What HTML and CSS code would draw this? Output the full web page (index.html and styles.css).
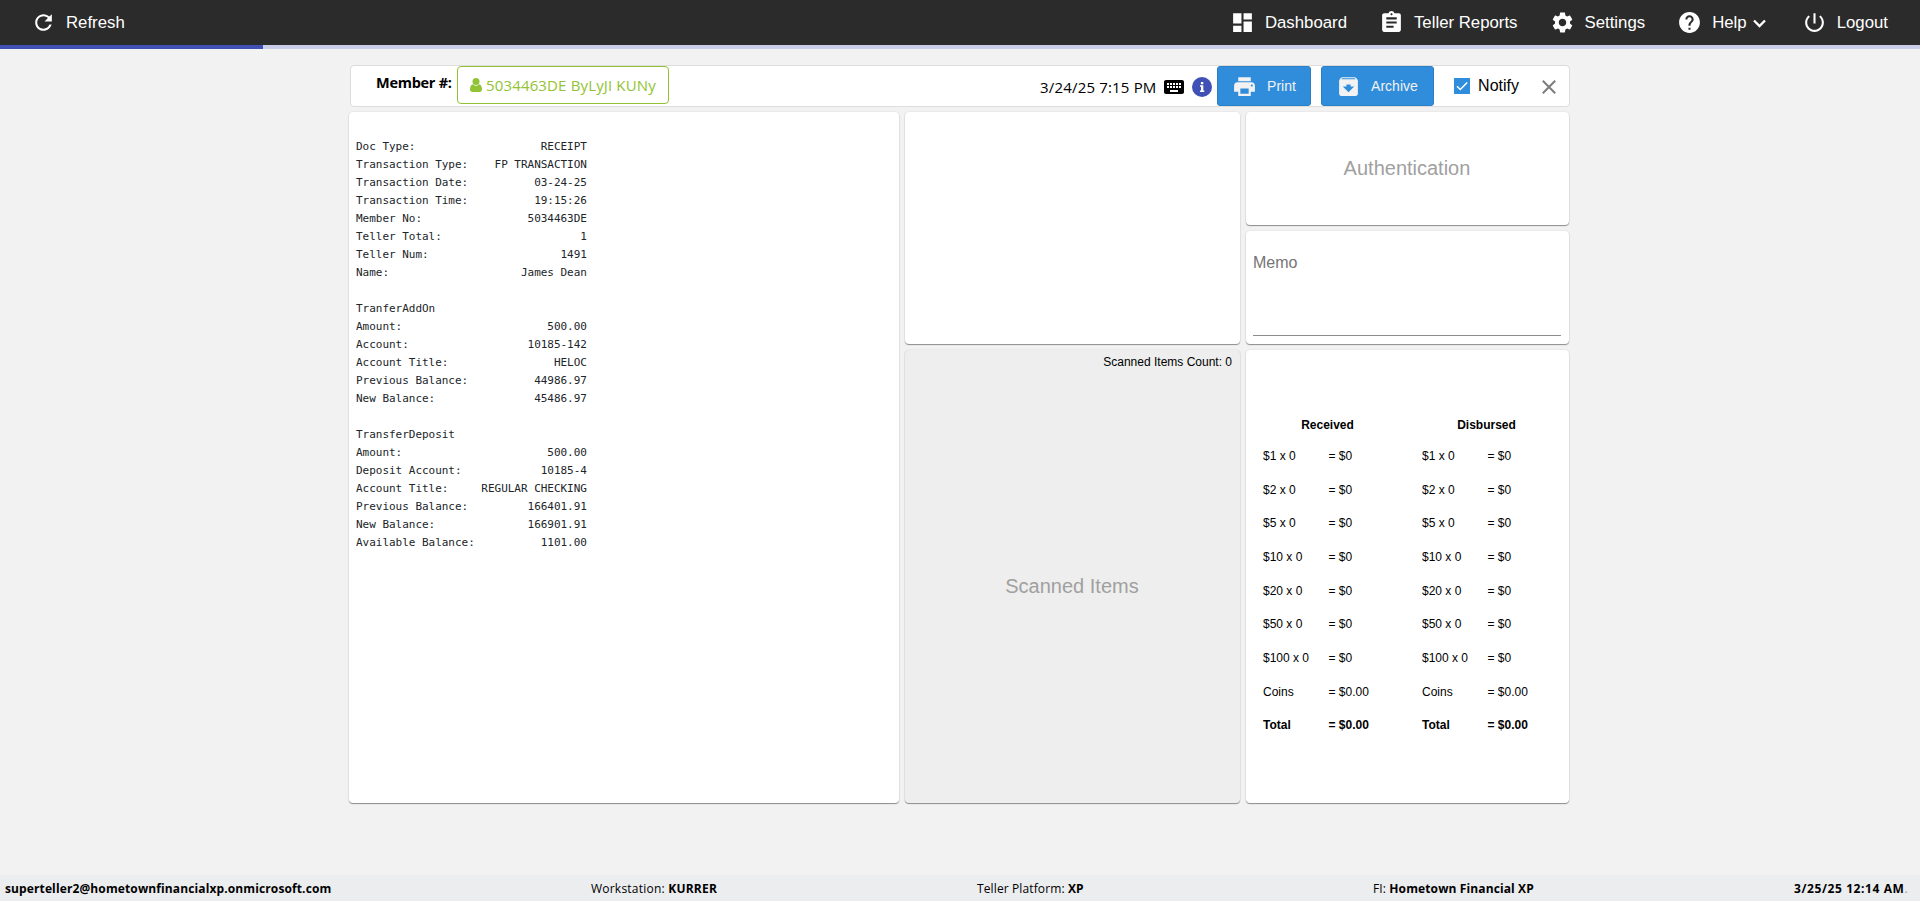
FILE: index.html
```html
<!DOCTYPE html>
<html lang="en">

<head>
	<meta charset="UTF-8">
	<meta name="viewport" content="width=device-width, initial-scale=1">
	<title>Teller Receipts</title>
	<link rel="stylesheet" href="styles.css">
</head>

<body>
	<header class="topbar">
		<a class="nav-item">
			<svg class="icon" viewBox="0 0 24 24"><path d="M17.65 6.35C16.2 4.9 14.21 4 12 4c-4.42 0-7.99 3.58-7.99 8s3.57 8 7.99 8c3.73 0 6.84-2.55 7.73-6h-2.08c-.82 2.33-3.04 4-5.65 4-3.31 0-6-2.69-6-6s2.69-6 6-6c1.66 0 3.14.69 4.22 1.78L13 11h7V4l-2.35 2.35z"/></svg>
			<span>Refresh</span>
		</a>
		<nav class="nav">
			<a class="nav-item">
				<svg class="icon" viewBox="0 0 24 24"><path d="M3 13h8V3H3v10zm0 8h8v-6H3v6zm10 0h8V11h-8v10zm0-18v6h8V3h-8z"/></svg>
				<span>Dashboard</span>
			</a>
			<a class="nav-item">
				<svg class="icon" viewBox="0 0 24 24"><path d="M19 3h-4.18C14.4 1.84 13.3 1 12 1c-1.3 0-2.4.84-2.82 2H5c-1.1 0-2 .9-2 2v14c0 1.1.9 2 2 2h14c1.1 0 2-.9 2-2V5c0-1.1-.9-2-2-2zm-7 0c.55 0 1 .45 1 1s-.45 1-1 1-1-.45-1-1 .45-1 1-1zm2 14H7v-2h7v2zm3-4H7v-2h10v2zm0-4H7V7h10v2z"/></svg>
				<span>Teller Reports</span>
			</a>
			<a class="nav-item">
				<svg class="icon" viewBox="0 0 24 24"><path d="M19.14 12.94c.04-.3.06-.61.06-.94 0-.32-.02-.64-.07-.94l2.03-1.58c.18-.14.23-.41.12-.61l-1.92-3.32c-.12-.22-.37-.29-.59-.22l-2.39.96c-.5-.38-1.03-.7-1.62-.94l-.36-2.54c-.04-.24-.24-.41-.48-.41h-3.84c-.24 0-.43.17-.47.41l-.36 2.54c-.59.24-1.13.57-1.62.94l-2.39-.96c-.22-.08-.47 0-.59.22L2.74 8.87c-.12.21-.08.47.12.61l2.03 1.58c-.05.3-.09.63-.09.94s.02.64.07.94l-2.03 1.58c-.18.14-.23.41-.12.61l1.92 3.32c.12.22.37.29.59.22l2.39-.96c.5.38 1.03.7 1.62.94l.36 2.54c.05.24.24.41.48.41h3.84c.24 0 .44-.17.47-.41l.36-2.54c.59-.24 1.13-.56 1.62-.94l2.39.96c.22.08.47 0 .59-.22l1.92-3.32c.12-.22.07-.47-.12-.61l-2.01-1.58zM12 15.6c-1.98 0-3.6-1.62-3.6-3.6s1.62-3.6 3.6-3.6 3.6 1.62 3.6 3.6-1.62 3.6-3.6 3.6z"/></svg>
				<span>Settings</span>
			</a>
			<a class="nav-item">
				<svg class="icon" viewBox="0 0 24 24"><path d="M12 2C6.48 2 2 6.48 2 12s4.48 10 10 10 10-4.48 10-10S17.52 2 12 2zm1 17h-2v-2h2v2zm2.07-7.75l-.9.92C13.45 12.9 13 13.5 13 15h-2v-.5c0-1.1.45-2.1 1.17-2.83l1.24-1.26c.37-.36.59-.86.59-1.41 0-1.1-.9-2-2-2s-2 .9-2 2H8c0-2.21 1.79-4 4-4s4 1.79 4 4c0 .88-.36 1.68-.93 2.25z"/></svg>
				<span>Help</span>
				<svg class="chevron" viewBox="0 0 13 9"><path d="M1 1.5l5.5 5.5L12 1.5"/></svg>
			</a>
			<a class="nav-item">
				<svg class="icon" viewBox="0 0 24 24"><path d="M13 3h-2v10h2V3zm4.83 2.17l-1.42 1.42C17.99 7.86 19 9.81 19 12c0 3.87-3.13 7-7 7s-7-3.13-7-7c0-2.19 1.01-4.14 2.58-5.42L6.17 5.17C4.23 6.82 3 9.26 3 12c0 4.97 4.03 9 9 9s9-4.03 9-9c0-2.74-1.23-5.18-3.17-6.83z"/></svg>
				<span>Logout</span>
			</a>
		</nav>
	</header>
	<div class="progress"><div class="progress-fill"></div></div>

	<main class="page">
		<div class="member-bar">
			<span class="member-label">Member #:</span>
			<button class="member-btn">
				<svg class="user-icon" viewBox="0 0 12 14"><circle cx="6" cy="3.6" r="3.5"/><path d="M3 6.3C1 6.6 0 8.7 0 11.3 0 13 1 14 2.5 14h7c1.5 0 2.5-1 2.5-2.7 0-2.6-1-4.7-3-5C8.2 7.2 7.2 7.8 6 7.8S3.8 7.2 3 6.3z"/></svg>
				<span>5034463DE ByLyJI KUNy</span>
			</button>
			<div class="member-actions">
				<span class="receipt-date">3/24/25 7:15 PM</span>
				<svg class="keyboard-icon" viewBox="2 5 20 14"><path d="M20 5H4c-1.1 0-2 .9-2 2v10c0 1.1.9 2 2 2h16c1.1 0 2-.9 2-2V7c0-1.1-.9-2-2-2zm-9 3h2v2h-2V8zm0 3h2v2h-2v-2zM8 8h2v2H8V8zm0 3h2v2H8v-2zm-1 2H5v-2h2v2zm0-3H5V8h2v2zm9 7H8v-2h8v2zm0-4h-2v-2h2v2zm0-3h-2V8h2v2zm3 3h-2v-2h2v2zm0-3h-2V8h2v2z"/></svg>
				<svg class="info-icon" viewBox="0 0 20 20"><circle cx="10" cy="10" r="10"/><path d="M8.9 5h2.4v2.2H8.9zM8 8.3h3.3v5.2h1V15H8v-1.5h1V9.8H8z"/></svg>
				<button class="btn btn-print">
					<svg class="icon" viewBox="0 0 24 24"><path d="M19 8H5c-1.66 0-3 1.34-3 3v6h4v4h12v-4h4v-6c0-1.66-1.34-3-3-3zm-3 11H8v-5h8v5zm3-7c-.55 0-1-.45-1-1s.45-1 1-1 1 .45 1 1-.45 1-1 1zm-1-9H6v4h12V3z"/></svg>
					<span>Print</span>
				</button>
				<button class="btn btn-archive">
					<svg class="icon" viewBox="0 0 24 24"><path d="M20.54 5.23l-1.39-1.68C18.88 3.21 18.47 3 18 3H6c-.47 0-.88.21-1.16.55L3.46 5.23C3.17 5.57 3 6.02 3 6.5V19c0 1.1.9 2 2 2h14c1.1 0 2-.9 2-2V6.5c0-.48-.17-.93-.46-1.27zM12 17.5L6.5 12H10v-2h4v2h3.5L12 17.5zM5.12 5l.81-1h12l.94 1H5.12z"/></svg>
					<span>Archive</span>
				</button>
				<label class="notify">
					<svg class="checkbox" viewBox="0 0 16 16"><rect width="16" height="16"/><path d="M3 8.2l3.3 3.3L13.2 4.500"/></svg>
					<span>Notify</span>
				</label>
				<svg class="close-icon" viewBox="0 0 14 14"><path d="M.8.8l12.4 12.4M13.2.8L.8 13.2"/></svg>
			</div>
		</div>

		<div class="board">
			<section class="card receipt">
				<pre class="receipt-text">

Doc Type:                   RECEIPT
Transaction Type:    FP TRANSACTION
Transaction Date:          03-24-25
Transaction Time:          19:15:26
Member No:                5034463DE
Teller Total:                     1
Teller Num:                    1491
Name:                    James Dean

TranferAddOn
Amount:                      500.00
Account:                  10185-142
Account Title:                HELOC
Previous Balance:          44986.97
New Balance:               45486.97

TransferDeposit
Amount:                      500.00
Deposit Account:            10185-4
Account Title:     REGULAR CHECKING
Previous Balance:         166401.91
New Balance:              166901.91
Available Balance:          1101.00</pre>
			</section>

			<section class="card preview"></section>

			<section class="card scanned">
				<div class="scanned-count">Scanned Items Count: 0</div>
				<div class="placeholder">Scanned Items</div>
			</section>

			<section class="card auth">
				<div class="placeholder">Authentication</div>
			</section>

			<section class="card memo">
				<div class="memo-field">Memo</div>
			</section>

			<section class="card cash">
				<table class="cash-table">
					<tr><th>Received</th></tr>
					<tr><td>$1 x 0</td><td>= $0</td></tr>
					<tr><td>$2 x 0</td><td>= $0</td></tr>
					<tr><td>$5 x 0</td><td>= $0</td></tr>
					<tr><td>$10 x 0</td><td>= $0</td></tr>
					<tr><td>$20 x 0</td><td>= $0</td></tr>
					<tr><td>$50 x 0</td><td>= $0</td></tr>
					<tr><td>$100 x 0</td><td>= $0</td></tr>
					<tr><td>Coins</td><td>= $0.00</td></tr>
					<tr class="total"><td>Total</td><td>= $0.00</td></tr>
				</table>
				<table class="cash-table">
					<tr><th>Disbursed</th></tr>
					<tr><td>$1 x 0</td><td>= $0</td></tr>
					<tr><td>$2 x 0</td><td>= $0</td></tr>
					<tr><td>$5 x 0</td><td>= $0</td></tr>
					<tr><td>$10 x 0</td><td>= $0</td></tr>
					<tr><td>$20 x 0</td><td>= $0</td></tr>
					<tr><td>$50 x 0</td><td>= $0</td></tr>
					<tr><td>$100 x 0</td><td>= $0</td></tr>
					<tr><td>Coins</td><td>= $0.00</td></tr>
					<tr class="total"><td>Total</td><td>= $0.00</td></tr>
				</table>
			</section>
		</div>
	</main>

	<footer class="statusbar">
		<span><b>superteller2@hometownfinancialxp.onmicrosoft.com</b></span>
		<span class="workstation">Workstation: <b>KURRER</b></span>
		<span>Teller Platform: <b>XP</b></span>
		<span>FI: <b>Hometown Financial XP</b></span>
		<span class="clock"><b>3/25/25 12:14 AM</b><span class="dot">.</span></span>
	</footer>
</body>

</html>
```
FILE: styles.css
```css
* {
	box-sizing: border-box;
}

body {
	margin: 0;
	height: 901px;
	display: flex;
	flex-direction: column;
	background: #f2f2f2;
	font-family: "Liberation Sans", Arial, sans-serif;
	color: #000;
	overflow: hidden;
}

/* top bar */
.topbar {
	height: 45px;
	padding: 0 32px 0 31px;
	display: flex;
	justify-content: space-between;
	align-items: center;
	background: #2b2b2b;
	color: #fff;
	font-size: 16.8px;
}

.nav {
	display: flex;
	gap: 32px;
}

.nav-item {
	display: flex;
	align-items: center;
	gap: 10px;
	height: 45px;
	line-height: 20px;
	white-space: nowrap;
}

.icon {
	width: 25px;
	height: 25px;
	fill: currentColor;
	flex: none;
}

.chevron {
	width: 13px;
	height: 9px;
	margin: 1px 4px 0 -4px;
	fill: none;
	stroke: #fff;
	stroke-width: 2.3;
}

.progress {
	height: 4px;
	background: #c9cde8;
}

.progress-fill {
	width: 263px;
	height: 4px;
	background: #3f51b5;
}

/* member bar */
.page {
	flex: 1;
	padding: 16px 0 0 349px;
}

.member-bar {
	width: 1220px;
	height: 42px;
	margin-left: 1px;
	padding-left: 25px;
	display: flex;
	align-items: center;
	background: #fff;
	border: 1px solid #ddd;
	border-radius: 4px;
	white-space: nowrap;
}

.member-label {
	width: 81px;
	font: bold 14.5px/20px "Open Sans", sans-serif;
	letter-spacing: -.27px;
	margin-top: -6px;
}

.member-btn {
	width: 212px;
	height: 38px;
	margin-top: -3px;
	padding: 0 12px;
	display: flex;
	align-items: center;
	gap: 4px;
	background: #fff;
	border: 1px solid #92c334;
	border-radius: 4px;
	color: #92c334;
	font: 15px/20px "Open Sans", sans-serif;
	letter-spacing: .15px;
}

.user-icon {
	width: 12px;
	height: 14px;
	fill: currentColor;
	flex: none;
}

.member-actions {
	margin-left: auto;
	padding-right: 13px;
	display: flex;
	align-items: center;
}

.receipt-date {
	width: 124px;
	padding-top: 2px;
	font: 15px/20px "Open Sans", sans-serif;
	letter-spacing: .17px;
}

.keyboard-icon {
	width: 20px;
	height: 14px;
	margin-right: 8px;
	margin-top: 2px;
}

.info-icon {
	width: 20px;
	height: 20px;
	margin-right: 5px;
	margin-top: 2px;
	fill: #3f51b5;
}

.info-icon path {
	fill: #fff;
}

.btn {
	height: 40px;
	display: flex;
	align-items: center;
	gap: 10px;
	background: #2f8ddb;
	border: 1px solid #2b7fc5;
	border-radius: 3px;
	color: #f2f2f2;
	font: 14px/18px "Liberation Sans", Arial, sans-serif;
	padding: 0 14px;
}

.btn .icon {
	margin-top: 1px;
}

.btn-print {
	width: 94px;
	margin-right: 10px;
}

.btn-archive {
	width: 113px;
	margin-right: 20px;
}

.notify {
	display: flex;
	align-items: center;
	gap: 8px;
	margin-right: 23px;
	font-size: 16px;
}

.checkbox {
	width: 16px;
	height: 16px;
	fill: #2f8ddb;
}

.checkbox path {
	fill: none;
	stroke: #fff;
	stroke-width: 1.5;
}

.close-icon {
	width: 14px;
	height: 14px;
	margin-top: 2px;
	stroke: #7c7c7c;
	stroke-width: 2;
}

/* cards */
.board {
	margin-top: 5px;
	display: grid;
	grid-template-columns: 550px 335px 323px;
	grid-template-rows: 113px 113px 453px;
	gap: 6px;
}

.card {
	background: #fff;
	border-radius: 4px;
	box-shadow: 0 1px 1px rgba(0, 0, 0, .4), 0 0 2px rgba(0, 0, 0, .12);
}

.receipt {
	grid-row: 1 / 4;
	padding: 8px 7px;
}

.receipt-text {
	margin: 0;
	font: 11px/18px "DejaVu Sans Mono", monospace;
	letter-spacing: -.025px;
	color: #212529;
}

.preview {
	grid-column: 2;
	grid-row: 1 / 3;
}

.scanned {
	grid-column: 2;
	grid-row: 3;
	background: #eee;
	display: flex;
	flex-direction: column;
}

.scanned-count {
	padding: 4px 8px 0;
	font-size: 12px;
	line-height: 16px;
	text-align: right;
}

.placeholder {
	flex: 1;
	display: flex;
	align-items: center;
	justify-content: center;
	padding-right: 1px;
	color: #a0a0a0;
	font-size: 20px;
}

.auth {
	grid-column: 3;
	grid-row: 1;
	display: flex;
}

.memo {
	grid-column: 3;
	grid-row: 2;
	padding: 7px 8px 8px 7px;
}

.memo-field {
	height: 98px;
	padding-top: 15px;
	border-bottom: 1px solid #8c8c8c;
	color: #757575;
	font-size: 16px;
	line-height: 20px;
}

.cash {
	grid-column: 3;
	grid-row: 3;
	padding: 61px 0 0 17px;
	display: flex;
}

.cash-table {
	display: block;
	flex: none;
	width: 159px;
	font-size: 12px;
}

.cash-table tbody {
	display: block;
}

.cash-table tr {
	display: flex;
	align-items: center;
	height: 33.65px;
}

.cash-table tr:first-child {
	height: 28.3px;
}

.cash-table th {
	width: 129px;
	padding: 0;
	text-align: center;
}

.cash-table td {
	padding: 0;
}

.cash-table td:first-child {
	width: 65.5px;
}

.total td {
	font-weight: bold;
}

/* status bar */
.statusbar {
	height: 26px;
	padding: 1px 10px 0 5px;
	display: grid;
	grid-template-columns: 586px 386px 396px 421px 1fr;
	align-items: center;
	background: #ebedef;
	font: 12px/18px "Open Sans", sans-serif;
	letter-spacing: .12px;
	white-space: nowrap;
}

.workstation {
	letter-spacing: .22px;
}

.clock {
	letter-spacing: .6px;
}

.dot {
	color: #999;
}
```
